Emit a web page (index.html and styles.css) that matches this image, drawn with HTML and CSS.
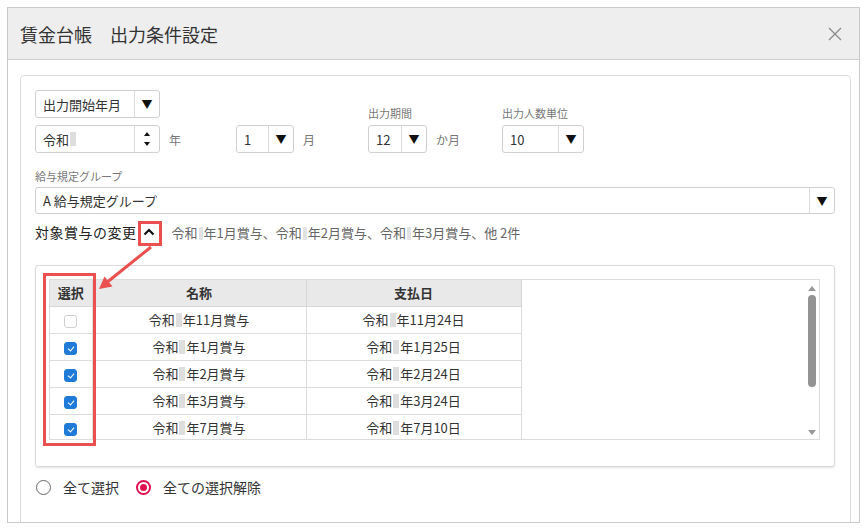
FILE: index.html
```html
<!DOCTYPE html>
<html lang="ja">
<head>
<meta charset="utf-8">
<title>賃金台帳 出力条件設定</title>
<link rel="stylesheet" href="styles.css">
</head>
<body>
<div class="page">
  <div class="dialog">
    <div class="dlg-header">
      <div class="dlg-title">賃金台帳　出力条件設定</div>
      <svg class="close" width="14" height="14" viewBox="0 0 14 14"><path d="M1 1L13 13M13 1L1 13" stroke="#8a8a8a" stroke-width="1.3" fill="none"/></svg>
    </div>
    <div class="dlg-body">
      <div class="panel">
        <div class="cond-grid">
          <div class="select w125"><span class="sel-text">出力開始年月</span><span class="sel-btn">▼</span></div>
          <div></div>
          <div class="field-label lbl-end">出力期間</div>
          <div class="field-label lbl-end">出力人数単位</div>

          <div class="with-unit">
            <div class="select w125"><span class="sel-text">令和<span class="redact"></span></span><span class="spin"><span class="spin-up"></span><span class="spin-down"></span></span></div>
            <span class="unit">年</span>
          </div>
          <div class="with-unit">
            <div class="select w58"><span class="sel-text">1</span><span class="sel-btn">▼</span></div>
            <span class="unit">月</span>
          </div>
          <div class="with-unit">
            <div class="select w60"><span class="sel-text">12</span><span class="sel-btn">▼</span></div>
            <span class="unit">か月</span>
          </div>
          <div class="with-unit">
            <div class="select w82"><span class="sel-text">10</span><span class="sel-btn">▼</span></div>
          </div>
        </div>

        <div class="field-label group-label">給与規定グループ</div>
        <div class="select full"><span class="sel-text">A 給与規定グループ</span><span class="sel-btn">▼</span></div>

        <div class="target-row">
          <span class="target-title">対象賞与の変更</span>
          <span class="caret-btn"><svg width="14" height="10" viewBox="0 0 14 10"><path d="M2.5 7.5L7 3L11.5 7.5" stroke="#111" stroke-width="2.2" fill="none"/></svg></span>
          <span class="target-summary">令和<span class="redact sm"></span>年1月賞与、令和<span class="redact sm"></span>年2月賞与、令和<span class="redact sm"></span>年3月賞与、他 2件</span>
        </div>

        <div class="table-panel">
          <div class="table-box">
            <table class="bonus-table">
              <colgroup><col class="c-sel"><col class="c-name"><col class="c-date"></colgroup>
              <thead>
                <tr><th>選択</th><th>名称</th><th>支払日</th></tr>
              </thead>
              <tbody>
                <tr><td><span class="chk"></span></td><td>令和<span class="redact"></span>年11月賞与</td><td>令和<span class="redact"></span>年11月24日</td></tr>
                <tr><td><span class="chk on"></span></td><td>令和<span class="redact"></span>年1月賞与</td><td>令和<span class="redact"></span>年1月25日</td></tr>
                <tr><td><span class="chk on"></span></td><td>令和<span class="redact"></span>年2月賞与</td><td>令和<span class="redact"></span>年2月24日</td></tr>
                <tr><td><span class="chk on"></span></td><td>令和<span class="redact"></span>年3月賞与</td><td>令和<span class="redact"></span>年3月24日</td></tr>
                <tr><td><span class="chk on"></span></td><td>令和<span class="redact"></span>年7月賞与</td><td>令和<span class="redact"></span>年7月10日</td></tr>
              </tbody>
            </table>
            <div class="scrollbar">
              <span class="sb-up"></span>
              <span class="sb-thumb"></span>
              <span class="sb-space"></span>
              <span class="sb-down"></span>
            </div>
          </div>
        </div>

        <div class="radio-row">
          <label class="radio"><span class="radio-dot"></span>全て選択</label>
          <label class="radio"><span class="radio-dot on"></span>全ての選択解除</label>
        </div>
      </div>
    </div>
  </div>

  <svg class="annot" width="866" height="530" viewBox="0 0 866 530">
    <rect x="139.5" y="222.5" width="21" height="22" fill="none" stroke="#e9504f" stroke-width="3"/>
    <rect x="44.5" y="274.5" width="50" height="170" fill="none" stroke="#e9504f" stroke-width="3"/>
    <line x1="151" y1="247" x2="108" y2="281.5" stroke="#e9504f" stroke-width="3"/>
    <polygon points="99,289 112.5,286.5 104.5,276.5" fill="#e9504f"/>
  </svg>
</div>
</body>
</html>
```

FILE: styles.css
```css
* { box-sizing: border-box; }
html, body { margin: 0; padding: 0; background: #fff; }
body {
  font-family: "Noto Sans CJK JP", "Noto Sans", sans-serif;
  color: #333;
  font-size: 13px;
}
.page { position: relative; width: 866px; height: 530px; overflow: hidden; }

.dialog {
  margin: 7px 0 0 7px;
  width: 853px;
  height: 516px;
  border: 1px solid #c9c9c9;
  background: #fff;
  overflow: hidden;
}
.dlg-header {
  height: 52px;
  background: #eeeeee;
  border-bottom: 1px solid #cfcfcf;
  display: flex;
  align-items: center;
  justify-content: space-between;
  padding: 0 17px 0 12px;
}
.dlg-title { font-size: 18px; line-height: 22px; color: #333; }
.close { display: block; }

.dlg-body { padding: 15px 8px 0 12px; }
.panel {
  border: 1px solid #dcdcdc;
  border-radius: 4px 4px 0 0;
  padding: 14px 15px 40px 14px;
  height: 520px;
}

.cond-grid {
  display: grid;
  grid-template-columns: 201px 132px 134px auto;
  grid-template-rows: 28px 28px;
  row-gap: 7px;
}
.field-label { font-size: 11px; line-height: 16px; color: #777; }
.lbl-end { align-self: end; margin-bottom: -3px; }
.with-unit { display: flex; align-items: center; }
.unit { font-size: 12px; color: #777; margin-left: 9px; }

.select {
  display: flex;
  align-items: stretch;
  height: 28px;
  border: 1px solid #cfcfcf;
  border-radius: 3px;
  background: #fff;
}
.w125 { width: 125px; }
.w58 { width: 58px; }
.w60 { width: 59px; }
.w82 { width: 82px; }
.select.full { width: 800px; height: 27px; }
.sel-text {
  flex: 1;
  display: flex;
  align-items: center;
  padding-left: 7px;
  font-size: 13px;
  color: #333;
  white-space: nowrap;
}
.sel-btn {
  width: 25px;
  border-left: 1px solid #dcdcdc;
  display: flex;
  align-items: center;
  justify-content: center;
  font-size: 11px;
  color: #111;
}
.spin {
  width: 25px;
  border-left: 1px solid #dcdcdc;
  display: flex;
  flex-direction: column;
  align-items: center;
  justify-content: center;
  gap: 6px;
}
.spin-up, .spin-down { width: 0; height: 0; border-left: 3px solid transparent; border-right: 3px solid transparent; }
.spin-up { border-bottom: 4px solid #111; }
.spin-down { border-top: 4px solid #111; }

.redact { display: inline-block; width: 6px; height: 14px; background: #dedede; vertical-align: -2px; margin: 0 1px; }
.redact.sm { width: 4px; height: 13px; background: #e2e2e2; }

.group-label { margin-top: 15px; margin-bottom: 3px; }

.target-row { display: flex; align-items: center; height: 24px; margin-top: 6px; }
.target-title { font-size: 14px; color: #222; letter-spacing: 0.5px; }
.caret-btn { width: 24px; height: 23px; display: flex; align-items: center; justify-content: center; margin-left: 0; }
.target-summary { font-size: 13px; color: #666; margin-left: 11px; }

.table-panel {
  margin-top: 21px;
  width: 800px;
  border: 1px solid #dadada;
  border-radius: 3px;
  box-shadow: 0 1px 2px rgba(0,0,0,0.12);
  padding: 13px 14px 26px 13px;
}
.table-box {
  height: 161px;
  border: 1px solid #dcdcdc;
  display: flex;
  overflow: hidden;
}
.bonus-table {
  border-collapse: collapse;
  table-layout: fixed;
  width: 471px;
  flex: none;
}
.c-sel { width: 42px; }
.c-name { width: 214px; }
.c-date { width: 215px; }
.bonus-table th {
  height: 26px;
  background: #e9e9e9;
  font-weight: bold;
  font-size: 13px;
  color: #333;
  border-right: 1px solid #d6d6d6;
  border-bottom: 1px solid #d6d6d6;
  padding: 0;
}
.bonus-table td {
  height: 27px;
  text-align: center;
  font-size: 13px;
  color: #333;
  border-right: 1px solid #dcdcdc;
  border-bottom: 1px solid #dcdcdc;
  padding: 0;
}
.chk {
  display: inline-block;
  width: 13px;
  height: 13px;
  border: 1px solid #cfcfcf;
  border-radius: 3px;
  background: #fff;
  vertical-align: middle;
  position: relative;
}
.chk.on { background: #1f7ad8; border-color: #1f7ad8; }
.chk.on::after {
  content: "";
  position: absolute;
  left: 3.5px;
  top: 2px;
  width: 3px;
  height: 5px;
  border-right: 1.6px solid #fff;
  border-bottom: 1.6px solid #fff;
  transform: rotate(40deg);
}

.scrollbar {
  margin-left: auto;
  width: 14px;
  display: flex;
  flex-direction: column;
  align-items: center;
  padding: 6px 0 4px;
}
.sb-up, .sb-down { width: 0; height: 0; border-left: 4px solid transparent; border-right: 4px solid transparent; }
.sb-up { border-bottom: 5px solid #999; }
.sb-down { border-top: 5px solid #999; }
.sb-thumb { width: 8px; height: 92px; border-radius: 4px; background: #939393; margin-top: 4px; }
.sb-space { flex: 1; }

.radio-row { display: flex; align-items: center; margin-top: 12px; height: 16px; padding-left: 1px; }
.radio { display: flex; align-items: center; font-size: 14px; color: #333; margin-right: 17px; }
.radio-dot {
  width: 15px; height: 15px; border-radius: 50%;
  border: 1.5px solid #666;
  margin-right: 12px;
  position: relative;
}
.radio-dot.on { border: 2px solid #e0104f; }
.radio-dot.on::after {
  content: "";
  position: absolute;
  left: 2px; top: 2px;
  width: 7px; height: 7px; border-radius: 50%;
  background: #e0104f;
}

.annot { position: absolute; left: 0; top: 0; pointer-events: none; }
```
